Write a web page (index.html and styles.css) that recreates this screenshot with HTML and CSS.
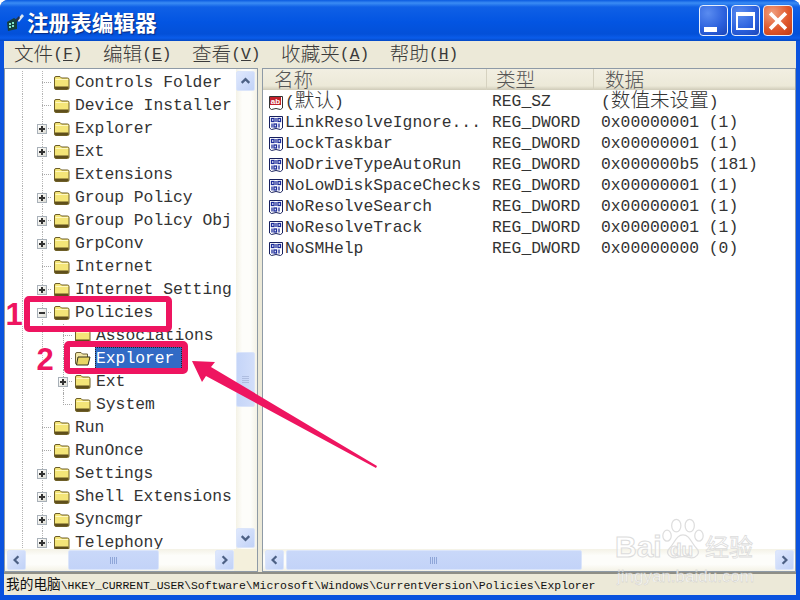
FILE: index.html
```html
<!DOCTYPE html>
<html lang="zh">
<head>
<meta charset="utf-8">
<title>注册表编辑器</title>
<link rel="stylesheet" href="styles.css">
</head>
<body>
<svg class="defs" width="0" height="0">
  <symbol id="folder" viewBox="0 0 17 15">
    <path d="M1.500 3 Q1.500 1.500 3 1.500 H7 L8.500 3 H14.500 Q16 3 16 4.500 V13 Q16 14.500 14.500 14.500 H3 Q1.500 14.500 1.500 13 Z" fill="#f4e578" stroke="#6e5f28"/>
    <path d="M2 11.500 H15.500 V13.500 Q15.500 14 14.500 14 H3 Q2 14 2 13.500 Z" fill="#5f4f1c"/>
    <path d="M2.500 4.500 H15" stroke="#fff8c0"/>
  </symbol>
  <symbol id="folder-open" viewBox="0 0 17 15">
    <path d="M1.500 3 Q1.500 1.500 3 1.500 H7 L8.500 3 H13.500 V13.500 H3 Q1.500 13.500 1.500 12 Z" fill="#f2e6a6" stroke="#6b5f36"/>
    <path d="M4 6 H16 L14 14 H2.500 Z" fill="#e9d665" stroke="#33301c"/>
  </symbol>
  <symbol id="reg-bin" viewBox="0 0 16 16">
    <path d="M1.500 1.500 H14.500 V13 L12.500 14.500 L8 13.500 L3.500 14.500 L1.500 13 Z" fill="#fff" stroke="#17205e"/>
    <g fill="none" stroke="#1c2c9a" stroke-width="1.300">
      <rect x="3.500" y="3.500" width="2.500" height="3"/><path d="M8 3 V7"/><rect x="10" y="3.500" width="2.500" height="3"/>
      <path d="M4 8.500 V12.500"/><rect x="6" y="9" width="2.500" height="3"/><path d="M11 8.500 V12.500"/>
    </g>
  </symbol>
  <symbol id="reg-str" viewBox="0 0 16 16">
    <path d="M1.500 1.500 H14.500 V13 L12.500 14.500 L8 13.500 L3.500 14.500 L1.500 13 Z" fill="#fff" stroke="#333"/>
    <rect x="2" y="2" width="11" height="8" fill="#c3202a"/>
    <text x="7.500" y="8.800" class="ab">ab</text>
  </symbol>
  <symbol id="up" viewBox="0 0 18 18"><path d="M5 11 L9 7 L13 11" class="chev"/></symbol>
  <symbol id="down" viewBox="0 0 18 18"><path d="M5 7 L9 11 L13 7" class="chev"/></symbol>
  <symbol id="left" viewBox="0 0 18 18"><path d="M11 5 L7 9 L11 13" class="chev"/></symbol>
  <symbol id="right" viewBox="0 0 18 18"><path d="M7 5 L11 9 L7 13" class="chev"/></symbol>
</svg>

<div class="window">
  <header class="titlebar">
    <svg class="appicon" viewBox="0 0 20 20" width="20" height="20">
      <path d="M2 10 L9 6 L12 8 V17 L3 19 Z" fill="#17403e"/>
      <path d="M4 11 H6 V13 H4 Z M7 10 H9 V12 H7 Z M4 14 H6 V16 H4 Z M7 13 H9 V15 H7 Z" fill="#7fe3c4"/>
      <path d="M12 8 L17 2 L19 4 L14 10 Z" fill="#dfe9f2"/>
      <path d="M10 8 L14 4 L15 6 L12 10 Z" fill="#24324a"/>
    </svg>
    <h1 class="title"><span>注册表编辑器</span></h1>
    <div class="winbtns">
      <div class="winbtn btn-min"><i></i></div>
      <div class="winbtn btn-max"><i></i></div>
      <div class="winbtn btn-close">
        <svg viewBox="0 0 30 30" width="30" height="30"><path d="M8 8 L22 22 M22 8 L8 22" stroke="#fff" stroke-width="4" stroke-linecap="square"/></svg>
      </div>
    </div>
  </header>

  <nav class="menubar">
    <span class="menu"><span class="zh">文件</span>(<u>F</u>)</span>
    <span class="menu"><span class="zh">编辑</span>(<u>E</u>)</span>
    <span class="menu"><span class="zh">查看</span>(<u>V</u>)</span>
    <span class="menu"><span class="zh">收藏夹</span>(<u>A</u>)</span>
    <span class="menu"><span class="zh">帮助</span>(<u>H</u>)</span>
  </nav>

  <main class="panes">
    <section class="pane tree-pane">
      <div class="tree-main">
        <div class="tree">
          <div class="row"><span class="slot"></span><svg class="fold"><use href="#folder"/></svg><span class="label">Controls Folder</span></div>
          <div class="row"><span class="slot"></span><svg class="fold"><use href="#folder"/></svg><span class="label">Device Installer</span></div>
          <div class="row"><span class="slot"><b class="box plus"></b></span><svg class="fold"><use href="#folder"/></svg><span class="label">Explorer</span></div>
          <div class="row"><span class="slot"><b class="box plus"></b></span><svg class="fold"><use href="#folder"/></svg><span class="label">Ext</span></div>
          <div class="row"><span class="slot"></span><svg class="fold"><use href="#folder"/></svg><span class="label">Extensions</span></div>
          <div class="row"><span class="slot"><b class="box plus"></b></span><svg class="fold"><use href="#folder"/></svg><span class="label">Group Policy</span></div>
          <div class="row"><span class="slot"><b class="box plus"></b></span><svg class="fold"><use href="#folder"/></svg><span class="label">Group Policy Obj</span></div>
          <div class="row"><span class="slot"><b class="box plus"></b></span><svg class="fold"><use href="#folder"/></svg><span class="label">GrpConv</span></div>
          <div class="row"><span class="slot"></span><svg class="fold"><use href="#folder"/></svg><span class="label">Internet</span></div>
          <div class="row"><span class="slot"><b class="box plus"></b></span><svg class="fold"><use href="#folder"/></svg><span class="label">Internet Setting</span></div>
          <div class="row"><span class="slot"><b class="box"></b></span><svg class="fold"><use href="#folder"/></svg><span class="label">Policies</span></div>
          <div class="row sub"><span class="slot"></span><svg class="fold"><use href="#folder"/></svg><span class="label">Associations</span></div>
          <div class="row sub"><span class="slot"></span><svg class="fold"><use href="#folder-open"/></svg><span class="label selected">Explorer</span></div>
          <div class="row sub"><span class="slot"><b class="box plus"></b></span><svg class="fold"><use href="#folder"/></svg><span class="label">Ext</span></div>
          <div class="row sub last"><span class="slot"></span><svg class="fold"><use href="#folder"/></svg><span class="label">System</span></div>
          <div class="row"><span class="slot"></span><svg class="fold"><use href="#folder"/></svg><span class="label">Run</span></div>
          <div class="row"><span class="slot"></span><svg class="fold"><use href="#folder"/></svg><span class="label">RunOnce</span></div>
          <div class="row"><span class="slot"><b class="box plus"></b></span><svg class="fold"><use href="#folder"/></svg><span class="label">Settings</span></div>
          <div class="row"><span class="slot"><b class="box plus"></b></span><svg class="fold"><use href="#folder"/></svg><span class="label">Shell Extensions</span></div>
          <div class="row"><span class="slot"><b class="box plus"></b></span><svg class="fold"><use href="#folder"/></svg><span class="label">Syncmgr</span></div>
          <div class="row"><span class="slot"><b class="box plus"></b></span><svg class="fold"><use href="#folder"/></svg><span class="label">Telephony</span></div>
        </div>
        <div class="vscroll">
          <div class="sbtn"><svg><use href="#up"/></svg></div>
          <div class="vthumb"><i></i></div>
          <div class="sbtn"><svg><use href="#down"/></svg></div>
        </div>
      </div>
      <div class="hscroll hscroll-tree">
        <div class="sbtn"><svg><use href="#left"/></svg></div>
        <div class="hthumb"><i></i></div>
        <div class="sbtn"><svg><use href="#right"/></svg></div>
        <div class="corner"></div>
      </div>
    </section>

    <section class="pane list-pane">
      <div class="list-head">
        <div class="th th-name"><span class="zh">名称</span></div>
        <div class="th th-type"><span class="zh">类型</span></div>
        <div class="th th-data"><span class="zh">数据</span></div>
      </div>
      <div class="list">
        <div class="lrow"><span class="cname"><svg class="regicon"><use href="#reg-str"/></svg><span class="zhwrap">(<span class="zh">默认</span>)</span></span><span>REG_SZ</span><span class="zhwrap">(<span class="zh">数值未设置</span>)</span></div>
        <div class="lrow"><span class="cname"><svg class="regicon"><use href="#reg-bin"/></svg>LinkResolveIgnore...</span><span>REG_DWORD</span><span>0x00000001 (1)</span></div>
        <div class="lrow"><span class="cname"><svg class="regicon"><use href="#reg-bin"/></svg>LockTaskbar</span><span>REG_DWORD</span><span>0x00000001 (1)</span></div>
        <div class="lrow"><span class="cname"><svg class="regicon"><use href="#reg-bin"/></svg>NoDriveTypeAutoRun</span><span>REG_DWORD</span><span>0x000000b5 (181)</span></div>
        <div class="lrow"><span class="cname"><svg class="regicon"><use href="#reg-bin"/></svg>NoLowDiskSpaceChecks</span><span>REG_DWORD</span><span>0x00000001 (1)</span></div>
        <div class="lrow"><span class="cname"><svg class="regicon"><use href="#reg-bin"/></svg>NoResolveSearch</span><span>REG_DWORD</span><span>0x00000001 (1)</span></div>
        <div class="lrow"><span class="cname"><svg class="regicon"><use href="#reg-bin"/></svg>NoResolveTrack</span><span>REG_DWORD</span><span>0x00000001 (1)</span></div>
        <div class="lrow"><span class="cname"><svg class="regicon"><use href="#reg-bin"/></svg>NoSMHelp</span><span>REG_DWORD</span><span>0x00000000 (0)</span></div>
      </div>
      <div class="hscroll hscroll-list">
        <div class="sbtn"><svg><use href="#left"/></svg></div>
        <div class="hthumb"><i></i></div>
        <div class="sbtn"><svg><use href="#right"/></svg></div>
      </div>
    </section>
  </main>

  <footer class="status"><span class="zh">我的电脑</span>\HKEY_CURRENT_USER\Software\Microsoft\Windows\CurrentVersion\Policies\Explorer</footer>
</div>

<svg class="annot" viewBox="0 0 800 600" width="800" height="600">
  <rect x="27" y="299" width="142" height="30" rx="2" class="mark"/>
  <rect x="67" y="344" width="118" height="27" rx="2" class="mark"/>
  <text x="14" y="325" class="num">1</text>
  <text x="45" y="370" class="num">2</text>
  <path d="M192 361 L215 362 L211 367 L377 466 L376 468 L206 376 L202 382 Z" class="arrow"/>
</svg>

<div class="watermark">
  <svg class="paw" viewBox="0 0 50 50" width="42" height="48">
    <g fill="none" stroke="#dedede" stroke-width="1.500">
      <ellipse cx="17" cy="9" rx="5.500" ry="7.500"/>
      <ellipse cx="33" cy="9" rx="5.500" ry="7.500"/>
      <ellipse cx="6" cy="21" rx="5" ry="6.500"/>
      <ellipse cx="44" cy="21" rx="5" ry="6.500"/>
      <path d="M25 20 C17 20 15 30 9 36 C3 42 10 49 18 47 Q25 45 32 47 C40 49 47 42 41 36 C35 30 33 20 25 20 Z"/>
    </g>
  </svg>
  <span class="wm-bai">Bai</span>
  <span class="wm-du">du</span>
  <span class="wm-jy">经验</span>
  <span class="wm-url">jingyan.baidu.com</span>
</div>
</body>
</html>
```
FILE: styles.css
```css
* { box-sizing: border-box; }
html, body { margin: 0; padding: 0; background: #fff; }
body {
  width: 800px;
  height: 600px;
  overflow: hidden;
  position: relative;
  font-family: "Liberation Mono", "Noto Sans CJK SC", monospace;
  font-size: 16.33px;
  color: #333;
}
.defs { position: absolute; }
.zh { font-family: "Noto Sans CJK SC", sans-serif; font-size: 19.6px; font-weight: 300; line-height: 1; }
.ab { font: bold 8px "Liberation Sans", sans-serif; fill: #fff; text-anchor: middle; }
.chev { fill: none; stroke: #4d6185; stroke-width: 2.4; }

.window {
  width: 800px;
  height: 600px;
  display: flex;
  flex-direction: column;
  padding: 0 4px 5px;
  border-radius: 8px 8px 0 0;
  background: #0a52de;
}

/* Title bar */
.titlebar {
  height: 41px;
  margin: 0 -4px;
  padding: 0 7px 0 5px;
  display: flex;
  align-items: center;
  border-radius: 8px 8px 0 0;
  background: linear-gradient(#0a5ae0 0, #3a8cf4 3px, #0f60e6 7px, #0355e2 22px, #0350d8 34px, #0a5cea 38px, #0448c4 41px);
}
.appicon { flex: none; margin-top: 3px; }
.title {
  margin: 2px 0 0 2px;
  flex: 1;
  font: bold 21.6px/1 "Noto Sans CJK SC", sans-serif;
  color: #fff;
  text-shadow: 1px 1px 1px #0a2a80;
}
.winbtns { display: flex; gap: 3px; }
.winbtn {
  width: 30px;
  height: 31px;
  border: 1px solid #e6eefc;
  border-radius: 4px;
  display: flex;
  position: relative;
  align-items: center;
  justify-content: center;
  background: radial-gradient(circle at 30% 25%, #5a8cf0, #2a5fdc 60%, #1b46b8);
}
.btn-min { width: 29px; }
.btn-min i { width: 13px; height: 5px; background: #fff; margin: 17px 6px 0 0; }
.btn-max { width: 29px; }
.btn-max i { width: 19px; height: 18px; border: 2px solid #fff; border-top-width: 4px; }
.btn-close { background: radial-gradient(circle at 30% 25%, #f0a080, #e0582c 55%, #c03a14); }

/* Menu */
.menubar {
  height: 27px;
  display: flex;
  align-items: center;
  gap: 20.400px;
  padding: 0 0 0 10px;
  background: #ece9d8;
  line-height: 27px;
  font-size: 16.33px;
  color: #3a3a3a;
}
.menu { white-space: nowrap; }
.menu .zh { vertical-align: -2px; }

/* Panes */
.panes {
  height: 504px;
  display: flex;
  gap: 4px;
  background: #ece9d8;
}
.pane {
  display: flex;
  flex-direction: column;
  border: 1px solid #8e9aa6;
  background: #fff;
  overflow: hidden;
}
.tree-pane { width: 254px; }
.list-pane { flex: 1; }

.tree-main { flex: 1; min-height: 0; display: flex; }
.tree {
  flex: 1;
  min-width: 0;
  padding-top: 2px;
  overflow: hidden;
}
.row {
  height: 23px;
  display: flex;
  align-items: center;
  padding-left: 28px;
  white-space: nowrap;
  background-image:
    linear-gradient(#b5b5b5 50%, transparent 50%),
    linear-gradient(#b5b5b5 50%, transparent 50%);
  background-size: 1px 2px;
  background-position: 17px 0, 37px 0;
  background-repeat: repeat-y;
}
.row.sub { padding-left: 49px; }
.slot {
  flex: none;
  width: 18px;
  height: 23px;
  position: relative;
  display: flex;
  align-items: center;
  justify-content: center;
}
.slot::after {
  content: "";
  position: absolute;
  left: 9px;
  right: 0;
  top: 11px;
  border-top: 1px dotted #a8a8a8;
}
.sub .slot::before {
  content: "";
  position: absolute;
  left: 9px;
  top: 0;
  bottom: 0;
  border-left: 1px dotted #a8a8a8;
}
.sub.last .slot::before { bottom: 11px; }
.box {
  width: 10px;
  height: 10px;
  position: relative;
  z-index: 1;
  border: 1px solid #a8b0b8;
  background: linear-gradient(135deg, #fff, #dcdcd4);
}
.box::before {
  content: "";
  position: absolute;
  left: 1px;
  top: 3px;
  width: 6px;
  height: 2px;
  background: #333;
}
.box.plus::after {
  content: "";
  position: absolute;
  left: 3px;
  top: 1px;
  width: 2px;
  height: 6px;
  background: #333;
}
.fold { flex: none; width: 17px; height: 15px; margin-left: 2px; }
.label { margin-left: 5px; line-height: 23px; }
.label.selected {
  margin-left: 4px;
  padding: 0 1px;
  width: 87px;
  background: #316ac5;
  color: #fff;
  outline: 1px dotted #222;
  outline-offset: -1px;
}

/* Scrollbars */
.vscroll {
  flex: none;
  width: 21px;
  padding: 2px 2px 1px 0;
  display: flex;
  flex-direction: column;
  background: linear-gradient(90deg, #f4f2e6, #fdfdfa 30%, #fdfdfa 70%, #f4f2e6);
}
.sbtn {
  flex: none;
  width: 19px;
  height: 20px;
  border: 1px solid #dbe5fa;
  border-radius: 2px;
  background: linear-gradient(135deg, #dfe8fd, #c1d2f7);
}
.sbtn svg { display: block; width: 17px; height: 18px; }
.vthumb {
  flex: none;
  width: 19px;
  height: 55px;
  margin: 261px 0 121px;
  border: 1px solid #dbe5fa;
  border-radius: 2px;
  background: linear-gradient(90deg, #c5d5f8, #d2defa);
  display: flex;
  align-items: center;
  justify-content: center;
}
.vthumb i {
  width: 7px;
  height: 8px;
  background: repeating-linear-gradient(#aebde0 0 1px, transparent 1px 2px);
}
.hthumb i {
  width: 8px;
  height: 7px;
  background: repeating-linear-gradient(90deg, #8fa6d8 0 1px, transparent 1px 2px);
}
.hscroll {
  flex: none;
  height: 22px;
  display: flex;
  align-items: center;
  background: linear-gradient(#f4f2e6, #fdfdfa 30%, #fdfdfa 70%, #f4f2e6);
}
.hthumb {
  flex: none;
  height: 20px;
  border: 1px solid #dbe5fa;
  border-radius: 2px;
  background: linear-gradient(#c9d8f9, #c3d3f8);
  display: flex;
  align-items: center;
  justify-content: center;
}
.hscroll-tree { padding-left: 2px; }
.hscroll-tree .hthumb { width: 91px; margin: 0 56px 0 42px; }
.corner { flex: 1; align-self: stretch; background: #f4f0dc; }
.hscroll-list { padding-left: 2px; }
.hscroll-list .hthumb { width: 296px; margin: 0 193px 0 2px; }

/* List */
.list-head {
  flex: none;
  height: 21px;
  display: flex;
  align-items: center;
  background: linear-gradient(#f2efe2, #ece9d8 80%, #cfcbb8);
  color: #555;
}
.th { height: 21px; line-height: 21px; border-right: 1px solid #d6d2c0; }
.th-name { width: 224px; padding-left: 11px; }
.th-type { width: 107px; padding-left: 9px; }
.th-data { flex: 1; padding-left: 11px; border-right: 0; }
.list { flex: 1; min-height: 0; padding-top: 1px; }
.lrow {
  height: 21px;
  line-height: 21px;
  display: grid;
  grid-template-columns: 229px 109px 1fr;
  white-space: pre;
}
.zhwrap { display: block; transform: translateY(-2px); }
.cname { display: flex; align-items: center; padding-left: 5px; }
.regicon { flex: none; width: 16px; height: 16px; margin-right: 1px; }

/* Status */
.status {
  height: 23px;
  padding: 3px 0 0 2px;
  border-top: 2px solid #8e8e86;
  background: #ece9d8;
  font-size: 11.43px;
  line-height: 18px;
  color: #111;
  white-space: nowrap;
}
.status .zh { font-size: 13.7px; font-weight: 400; }

/* Annotations */
.annot { position: absolute; left: 0; top: 0; pointer-events: none; }
.mark { fill: none; stroke: #ee1560; stroke-width: 6; }
.arrow { fill: #ee1560; }
.num {
  font: bold 31px "Liberation Sans", sans-serif;
  fill: #ee1560;
  stroke: #fff;
  stroke-width: 2;
  paint-order: stroke;
  text-anchor: middle;
}

/* Watermark */
.watermark { position: absolute; left: 600px; top: 500px; width: 200px; height: 100px; }
.watermark > * { position: absolute; }
.paw { left: 62px; top: 15px; }
.wm-bai, .wm-du {
  font: bold 30px/1 "Liberation Sans", sans-serif;
  color: rgba(255,255,255,.6);
  -webkit-text-stroke: 1px #dcdcdc;
}
.wm-bai { left: 15px; top: 32px; }
.wm-du { left: 70px; top: 40px; font-size: 19px; }
.wm-jy {
  left: 105px;
  top: 34px;
  font: 400 24px/1 "Noto Sans CJK SC", sans-serif;
  color: transparent;
  -webkit-text-stroke: .8px #dcdcdc;
}
.wm-url {
  left: 17px;
  top: 68px;
  font: 17px/1 "Liberation Sans", sans-serif;
  color: rgba(255,255,255,.75);
  -webkit-text-stroke: .3px #c4c4c4;
  white-space: nowrap;
}
```
